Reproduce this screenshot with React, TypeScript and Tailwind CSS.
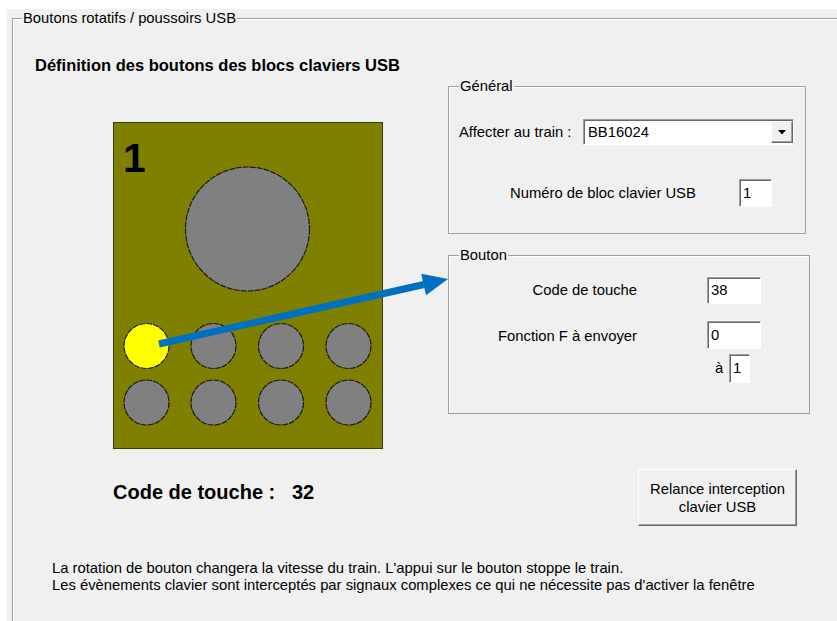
const sunken =
  "border border-t-[#a0a0a0] border-l-[#a0a0a0] border-r-white border-b-white bg-white shadow-[inset_1px_1px_0_#696969]";
const raised =
  "border border-t-white border-l-white border-r-[#696969] border-b-[#696969] bg-[#f0f0f0] shadow-[inset_-1px_-1px_0_#a0a0a0]";
const groupBox =
  "border border-[#a0a0a0] shadow-[inset_1px_1px_0_#fff]";

const smallX = [33.5, 100.5, 168, 235.5];
const smallY = [224, 280.5];

function Board() {
  return (
    <svg width="270" height="327" viewBox="0 0 270 327" className="block">
      <rect x="0.5" y="0.5" width="269" height="326" fill="#808000" stroke="#3a3a10" />
      <text
        x="10"
        y="50"
        fontFamily="'Liberation Sans', Arial, sans-serif"
        fontWeight="bold"
        fontSize="41"
        fill="#000"
      >
        1
      </text>
      <circle cx="134.5" cy="107" r="62" fill="#808080" stroke="#1a1a1a" strokeWidth="1.2" strokeDasharray="6 1" />
      {smallY.map((cy, row) =>
        smallX.map((cx, col) => (
          <circle
            key={`${row}-${col}`}
            cx={cx}
            cy={cy}
            r="22.5"
            fill={row === 0 && col === 0 ? "#ffff00" : "#808080"}
            stroke="#1a1a1a"
            strokeWidth="1.2"
            strokeDasharray="6 1"
          />
        ))
      )}
    </svg>
  );
}

function Arrow() {
  return (
    <svg width="837" height="621" className="pointer-events-none absolute left-0 top-0">
      <line x1="159" y1="344" x2="424" y2="284.5" stroke="#0070c0" strokeWidth="7" />
      <polygon points="448,279 421.2,273.8 426,295.2" fill="#0070c0" />
    </svg>
  );
}

export default function App() {
  return (
    <div className="relative h-[621px] w-[837px] overflow-hidden bg-white font-['Liberation_Sans',Arial,sans-serif] text-[14.8px] text-black">
      <div className="ml-[7px] mt-[9px] h-[640px] bg-[#f0f0f0] pl-[5px] pt-[1px]">
        <fieldset className={`h-[700px] w-[900px] ${groupBox}`}>
          <legend className="ml-[9px] bg-[#f0f0f0] px-[1px] leading-[16px]">
            Boutons rotatifs / poussoirs USB
          </legend>

          <h1 className="ml-[22px] mt-[29px] text-[16.5px] font-bold leading-[20px]">
            Définition des boutons des blocs claviers USB
          </h1>

          <div className="flex items-start">
            <div className="ml-[100px] mt-[47px] w-[270px]">
              <Board />
              <p className="mt-[32px] whitespace-pre text-[20px] font-bold leading-[22px]">
                Code de touche :   32
              </p>
            </div>

            <div className="ml-[65px] mt-[3px] flex flex-col items-start">
              <fieldset className={`w-[358px] pb-[26px] ${groupBox}`}>
                <legend className="ml-[10px] bg-[#f0f0f0] px-[1px] leading-[16px]">Général</legend>
                <div className="ml-[10px] mt-[25px] flex items-center">
                  <span className="w-[124px]">Affecter au train :</span>
                  <div className={`flex h-[26px] w-[211px] items-center ${sunken}`}>
                    <span className="flex-1 pl-[4px] leading-none">BB16024</span>
                    <div className={`flex h-[22px] w-[22px] items-center justify-center ${raised}`}>
                      <svg width="8" height="5" viewBox="0 0 8 5">
                        <polygon points="0,0 8,0 4,4.5" fill="#000" />
                      </svg>
                    </div>
                  </div>
                </div>
                <div className="ml-[61px] mt-[34px] flex items-center">
                  <span className="w-[229px]">Numéro de bloc clavier USB</span>
                  <div className={`flex h-[28px] w-[33px] items-center pl-[3px] ${sunken}`}>1</div>
                </div>
              </fieldset>

              <fieldset className={`mt-[13px] w-[362px] pb-[30px] ${groupBox}`}>
                <legend className="ml-[10px] bg-[#f0f0f0] px-[1px] leading-[16px]">Bouton</legend>
                <div className="mt-[14px] flex items-center">
                  <span className="w-[188px] text-right">Code de touche</span>
                  <div className={`ml-[70px] flex h-[27px] w-[54px] items-center pl-[3px] ${sunken}`}>38</div>
                </div>
                <div className="mt-[17px] flex items-center">
                  <span className="mt-[2px] w-[188px] text-right">Fonction F à envoyer</span>
                  <div className={`ml-[70px] flex h-[28px] w-[54px] items-center pl-[3px] ${sunken}`}>0</div>
                </div>
                <div className="ml-[266px] mt-[5px] flex items-center">
                  <span className="w-[14px]">à</span>
                  <div className={`flex h-[29px] w-[21px] items-center pl-[3px] ${sunken}`}>1</div>
                </div>
              </fieldset>

              <button
                type="button"
                className={`ml-[190px] mt-[55px] h-[57px] w-[159px] text-center leading-[18px] ${raised}`}
              >
                Relance interception
                <br />
                clavier USB
              </button>
            </div>
          </div>

          <div className="ml-[39px] mt-[34px] leading-[17px]">
            <p>La rotation de bouton changera la vitesse du train. L'appui sur le bouton stoppe le train.</p>
            <p>Les évènements clavier sont interceptés par signaux complexes ce qui ne nécessite pas d'activer la fenêtre</p>
          </div>
        </fieldset>
      </div>
      <Arrow />
    </div>
  );
}
